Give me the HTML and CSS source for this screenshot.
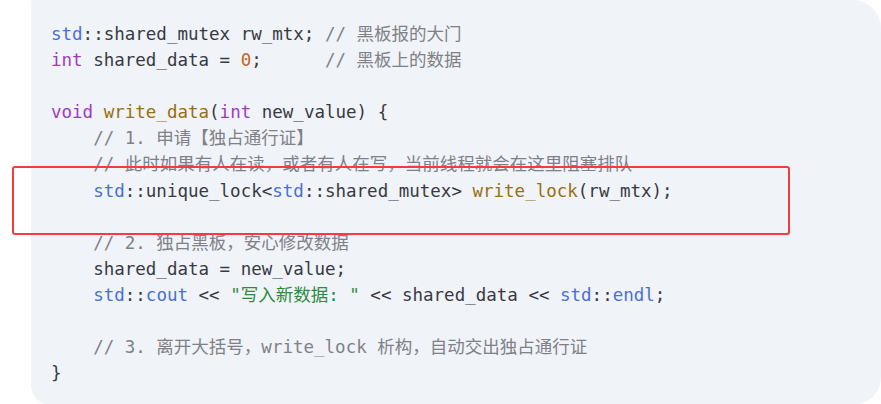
FILE: index.html
```html
<!DOCTYPE html>
<html lang="zh-CN">
<head>
<meta charset="utf-8">
<title>shared_mutex</title>
<link rel="stylesheet" href="styles.css">
</head>
<body>
<div class="page">
<pre class="code"><code><span class="ns">std</span>::shared_mutex rw_mtx; <span class="cm">// 黑板报的大门</span>
<span class="kw">int</span> shared_data = <span class="num">0</span>;      <span class="cm">// 黑板上的数据</span>

<span class="kw">void</span> <span class="fn">write_data</span>(<span class="kw">int</span> new_value) {
    <span class="cm">// 1. 申请【独占通行证】</span>
    <span class="cm">// 此时如果有人在读，或者有人在写，当前线程就会在这里阻塞排队</span>
    <span class="ns">std</span>::unique_lock&lt;<span class="ns">std</span>::shared_mutex&gt; <span class="fn">write_lock</span>(rw_mtx);

    <span class="cm">// 2. 独占黑板，安心修改数据</span>
    shared_data = new_value;
    <span class="ns">std</span>::<span class="ns">cout</span> &lt;&lt; <span class="str">"写入新数据: "</span> &lt;&lt; shared_data &lt;&lt; <span class="ns">std</span>::<span class="ns">endl</span>;

    <span class="cm">// 3. 离开大括号，write_lock 析构，自动交出独占通行证</span>
}</code></pre>
<div class="highlight"></div>
</div>
</body>
</html>
```
FILE: styles.css
```css
html, body {
  margin: 0;
  padding: 0;
  background: #ffffff;
  overflow: hidden;
}
.page {
  position: relative;
  width: 881px;
  height: 404px;
  padding-left: 31px;
  box-sizing: border-box;
}
.code {
  margin: 0;
  width: 850px;
  height: 405px;
  box-sizing: border-box;
  padding: 21px 0 0 20px;
  background: #f0f3f8;
  border-radius: 2px 28px 28px 20px;
  font-family: "DejaVu Sans Mono", "Noto Sans CJK SC", monospace;
  font-size: 17.5px;
  line-height: 26.1px;
  color: #383a42;
  white-space: pre;
}
.code code {
  font-family: inherit;
}
.ns { color: #4a6fd6; }
.kw { color: #9d3bbf; }
.fn { color: #98700f; }
.num { color: #c0661c; }
.str { color: #2f8a3e; }
.cm {
  color: #7f8185;
}
.highlight {
  position: absolute;
  left: 12px;
  top: 166px;
  width: 778px;
  height: 69px;
  box-sizing: border-box;
  border: 2px solid #f53b3b;
  border-radius: 3px;
}
```
